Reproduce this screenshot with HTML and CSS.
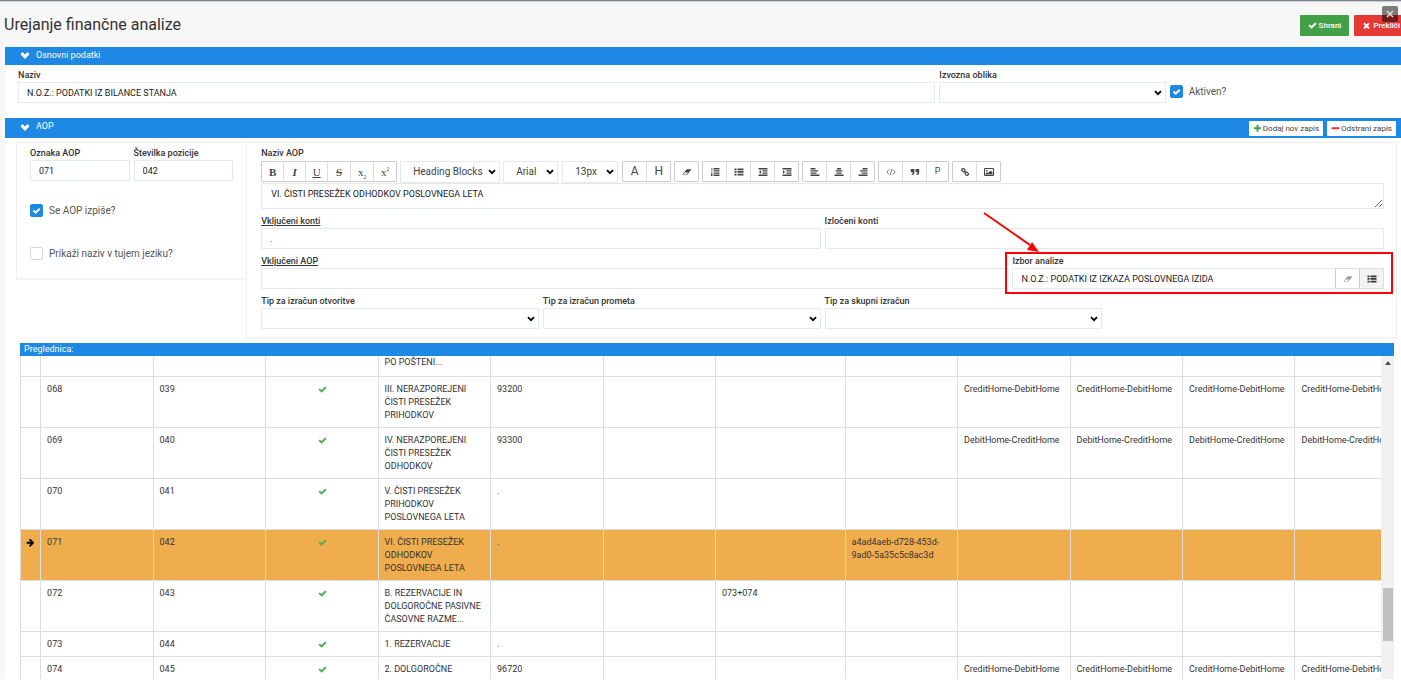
FILE: index.html
```html
<!DOCTYPE html>
<html lang="sl">
<head>
<meta charset="utf-8">
<title>Urejanje finančne analize</title>
<link rel="stylesheet" href="styles.css">
</head>
<body>
<svg class="sprite" aria-hidden="true">
  <symbol id="check" viewBox="0 0 1792 1792"><path d="M1671 566q0 40-28 68l-724 724-136 136q-28 28-68 28t-68-28l-136-136-362-362q-28-28-28-68t28-68l136-136q28-28 68-28t68 28l294 295 656-657q28-28 68-28t68 28l136 136q28 28 28 68z"/></symbol>
  <symbol id="times" viewBox="0 0 1792 1792"><path d="M1490 1322q0 40-28 68l-136 136q-28 28-68 28t-68-28l-294-294-294 294q-28 28-68 28t-68-28l-136-136q-28-28-28-68t28-68l294-294-294-294q-28-28-28-68t28-68l136-136q28-28 68-28t68 28l294 294 294-294q28-28 68-28t68 28l136 136q28 28 28 68t-28 68l-294 294 294 294q28 28 28 68z"/></symbol>
  <symbol id="plus" viewBox="0 0 1792 1792"><path d="M1600 736v192q0 40-28 68t-68 28h-416v416q0 40-28 68t-68 28h-192q-40 0-68-28t-28-68v-416h-416q-40 0-68-28t-28-68v-192q0-40 28-68t68-28h416v-416q0-40 28-68t68-28h192q40 0 68 28t28 68v416h416q40 0 68 28t28 68z"/></symbol>
  <symbol id="minus" viewBox="0 0 1792 1792"><rect x="96" y="640" width="1600" height="384" rx="96"/></symbol>
  <symbol id="chevron" viewBox="0 0 1792 1792"><path d="M1683 808l-742 741q-19 19-45 19t-45-19l-742-741q-19-19-19-45.500t19-45.500l296-295q19-19 45-19t45 19l401 401 401-401q19-19 45-19t45 19l296 295q19 19 19 45.500t-19 45.500z"/></symbol>
  <symbol id="arrow" viewBox="0 0 1792 1792"><path d="M1600 960q0 54-37 91l-651 651q-39 37-91 37-51 0-90-37l-75-75q-38-38-38-91t38-91l293-293h-704q-52 0-84.500-37.500t-32.500-90.500v-128q0-53 32.500-90.500t84.500-37.500h704l-293-294q-38-36-38-90t38-90l75-75q38-38 90-38 53 0 91 38l651 651q37 35 37 90z"/></symbol>
  <symbol id="eraser" viewBox="0 0 1856 1792"><path d="M832 1408l336-384h-768l-336 384h768zm1013-1077q15 34 9.500 71.500t-30.500 65.500l-896 1024q-38 44-96 44h-768q-38 0-69.500-20.500t-47.500-54.500q-15-34-9.500-71.500t30.500-65.500l896-1024q38-44 96-44h768q38 0 69.500 20.500t47.500 54.500z"/></symbol>
  <symbol id="ol" viewBox="0 0 9 8"><path d="M3 0h6v1.400H3zM3 2.200h6v1.400H3zM3 4.400h6v1.400H3zM3 6.600h6v1.400H3zM1 0h.8v2.600H1zM.5 3.400h1.300v1H.5zM.5 5.400h1.500v2.600H.5z"/></symbol>
  <symbol id="ul" viewBox="0 0 9 8"><path d="M0 .5h2v1.700H0zM3 .5h6v1.700H3zM0 3.100h2v1.700H0zM3 3.100h6v1.700H3zM0 5.700h2v1.700H0zM3 5.700h6v1.700H3z"/></symbol>
  <symbol id="outdent" viewBox="0 0 9 8"><path d="M0 0h9v1.400H0zM4 2.200h5v1.400H4zM4 4.400h5v1.400H4zM0 6.600h9v1.400H0zM2.600 2v4L.4 4z"/></symbol>
  <symbol id="indent" viewBox="0 0 9 8"><path d="M0 0h9v1.400H0zM4 2.200h5v1.400H4zM4 4.400h5v1.400H4zM0 6.600h9v1.400H0zM.4 2v4l2.200-2z"/></symbol>
  <symbol id="left" viewBox="0 0 9 8"><path d="M0 0h5v1.400H0zM0 2.200h7.500v1.400H0zM0 4.400h6v1.400H0zM0 6.600h9v1.400H0z"/></symbol>
  <symbol id="center" viewBox="0 0 9 8"><path d="M2.500 0h4v1.400h-4zM1 2.200h7v1.400H1zM2 4.400h5v1.400H2zM0 6.600h9v1.400H0z"/></symbol>
  <symbol id="right" viewBox="0 0 9 8"><path d="M4 0h5v1.400H4zM1.500 2.200H9v1.400H1.500zM3 4.400h6v1.400H3zM0 6.600h9v1.400H0z"/></symbol>
  <symbol id="code" viewBox="0 0 9 8"><path d="M2.500 1.500L.5 4l2 2.500M6.500 1.500l2 2.500-2 2.500M5.300.8L3.700 7.200" fill="none" stroke="currentColor" stroke-width=".7"/></symbol>
  <symbol id="quote" viewBox="0 0 9 8"><path d="M.3 1h3.600v3.500Q3.900 7 1.200 7V5.800q1.200 0 1.200-1.500H.3zM5.100 1h3.600v3.500Q8.700 7 6 7V5.800q1.200 0 1.200-1.500H5.100z"/></symbol>
  <symbol id="link" viewBox="0 0 9 8"><g fill="none" stroke="currentColor" stroke-width="1.200"><rect x="1.200" y=".8" width="3.400" height="2.600" rx="1.200" transform="rotate(40 2.900 2.100)"/><rect x="4.600" y="4.500" width="3.400" height="2.600" rx="1.200" transform="rotate(40 6.300 5.800)"/><path d="M3.600 3l2 2"/></g></symbol>
  <symbol id="image" viewBox="0 0 10 8"><path d="M.5.500h9v7h-9z" fill="none" stroke="currentColor"/><circle cx="2.800" cy="2.600" r=".9"/><path d="M1.500 6.600V5.400L3 4l1 1 2.600-2.600 2 2v2.200z"/></symbol>
</svg>

<div class="page">
  <header class="header">
    <h1 class="title">Urejanje finančne analize</h1>
    <div class="actions">
      <button class="btn save" type="button"><svg class="ico"><use href="#check"/></svg>Shrani</button>
      <button class="btn cancel" type="button"><svg class="ico"><use href="#times"/></svg>Prekliči</button>
    </div>
    <button class="close" type="button" aria-label="Zapri"><svg viewBox="0 0 8 8"><path d="M1 1l6 6M7 1L1 7"/></svg></button>
  </header>

  <main class="content">
    <h2 class="bar basic-bar"><svg class="ico"><use href="#chevron"/></svg>Osnovni podatki</h2>
    <section class="basic grid">
      <div class="field span8"><label for="naziv">Naziv</label><input class="input" id="naziv" value="N.O.Z.: PODATKI IZ BILANCE STANJA"></div>
      <div class="field span2"><label for="oblika">Izvozna oblika</label><select class="input" id="oblika"><option></option></select></div>
      <div class="tick span2"><input type="checkbox" id="aktiven" checked><label for="aktiven">Aktiven?</label></div>
    </section>

    <div class="bar aop-bar">
      <h2 class="bar-title"><svg class="ico"><use href="#chevron"/></svg>AOP</h2>
      <button class="small" type="button"><svg class="ico green"><use href="#plus"/></svg>Dodaj nov zapis</button>
      <button class="small" type="button"><svg class="ico red"><use href="#minus"/></svg>Odstrani zapis</button>
    </div>
    <section class="aop">
      <div class="panel side">
        <div class="pair">
          <div class="field"><label for="oznaka">Oznaka AOP</label><input class="input" id="oznaka" value="071"></div>
          <div class="field"><label for="stevilka">Številka pozicije</label><input class="input" id="stevilka" value="042"></div>
        </div>
        <div class="ticks">
          <div class="tick"><input type="checkbox" id="izpis" checked><label for="izpis">Se AOP izpiše?</label></div>
          <div class="tick"><input type="checkbox" id="tuj"><label for="tuj">Prikaži naziv v tujem jeziku?</label></div>
        </div>
      </div>

      <div class="panel main grid">
        <div class="field span12">
          <label for="nazivaop">Naziv AOP</label>
          <div class="toolbar">
            <div class="group serif">
              <button type="button"><b>B</b></button><button type="button"><b><i>I</i></b></button><button type="button"><u>U</u></button><button type="button"><s>S</s></button><button type="button"><span>x<sub>2</sub></span></button><button type="button"><span>x<sup>2</sup></span></button>
            </div>
            <select class="input blocks" aria-label="Slog"><option>Heading Blocks</option></select>
            <select class="input family" aria-label="Pisava"><option>Arial</option></select>
            <select class="input size" aria-label="Velikost"><option>13px</option></select>
            <div class="group big"><button type="button">A</button><button type="button">H</button></div>
            <div class="group"><button type="button" aria-label="Počisti"><svg class="tool"><use href="#eraser"/></svg></button></div>
            <div class="group">
              <button type="button" aria-label="Oštevilčen seznam"><svg class="tool"><use href="#ol"/></svg></button><button type="button" aria-label="Seznam"><svg class="tool"><use href="#ul"/></svg></button><button type="button" aria-label="Zmanjšaj zamik"><svg class="tool"><use href="#outdent"/></svg></button><button type="button" aria-label="Povečaj zamik"><svg class="tool"><use href="#indent"/></svg></button>
            </div>
            <div class="group">
              <button type="button" aria-label="Levo"><svg class="tool"><use href="#left"/></svg></button><button type="button" aria-label="Sredina"><svg class="tool"><use href="#center"/></svg></button><button type="button" aria-label="Desno"><svg class="tool"><use href="#right"/></svg></button>
            </div>
            <div class="group">
              <button type="button" aria-label="Koda"><svg class="tool"><use href="#code"/></svg></button><button type="button" aria-label="Citat"><svg class="tool"><use href="#quote"/></svg></button><button class="para" type="button">P</button>
            </div>
            <div class="group">
              <button type="button" aria-label="Povezava"><svg class="tool"><use href="#link"/></svg></button><button type="button" aria-label="Slika"><svg class="tool"><use href="#image"/></svg></button>
            </div>
          </div>
          <textarea class="input area" id="nazivaop">VI. ČISTI PRESEŽEK ODHODKOV POSLOVNEGA LETA</textarea>
        </div>
        <div class="field span6"><label class="under" for="vkonti">Vključeni konti</label><input class="input" id="vkonti" value="."></div>
        <div class="field span6"><label for="ikonti">Izločeni konti</label><input class="input" id="ikonti"></div>
        <div class="field span8"><label class="under" for="vaop">Vključeni AOP</label><input class="input" id="vaop"></div>
        <div class="field span4 marked">
          <label for="analiza">Izbor analize</label>
          <div class="combo">
            <input class="input" id="analiza" value="N.O.Z.: PODATKI IZ IZKAZA POSLOVNEGA IZIDA">
            <button class="pick faded" type="button" aria-label="Počisti"><svg class="tool"><use href="#eraser"/></svg></button>
            <button class="pick shaded" type="button" aria-label="Izberi"><svg class="tool"><use href="#ul"/></svg></button>
          </div>
          <svg class="pointer" viewBox="0 0 60 44"><path d="M2 2l46 32" fill="none" stroke="#f00" stroke-width="2"/><path d="M57 41l-12-2 5-8z" fill="#f00"/></svg>
        </div>
        <div class="field span3"><label for="otv">Tip za izračun otvoritve</label><select class="input" id="otv"><option></option></select></div>
        <div class="field span3"><label for="pro">Tip za izračun prometa</label><select class="input" id="pro"><option></option></select></div>
        <div class="field span3"><label for="sku">Tip za skupni izračun</label><select class="input" id="sku"><option></option></select></div>
      </div>
    </section>

    <section class="list">
      <h2 class="list-title">Preglednica:</h2>
      <div class="list-body">
        <div class="viewport">
          <table class="table">
            <colgroup><col class="c-mark"><col><col><col><col><col><col><col class="c-wide"><col><col><col><col><col></colgroup>
            <tbody>
              <tr><td></td><td></td><td></td><td></td><td>PO POŠTENI...</td><td></td><td></td><td></td><td></td><td></td><td></td><td></td><td></td></tr>
              <tr><td></td><td>068</td><td>039</td><td class="ok"><svg class="ico"><use href="#check"/></svg></td><td>III. NERAZPOREJENI ČISTI PRESEŽEK PRIHODKOV</td><td>93200</td><td></td><td></td><td></td><td>CreditHome-DebitHome</td><td>CreditHome-DebitHome</td><td>CreditHome-DebitHome</td><td>CreditHome-DebitHome</td></tr>
              <tr><td></td><td>069</td><td>040</td><td class="ok"><svg class="ico"><use href="#check"/></svg></td><td>IV. NERAZPOREJENI ČISTI PRESEŽEK ODHODKOV</td><td>93300</td><td></td><td></td><td></td><td>DebitHome-CreditHome</td><td>DebitHome-CreditHome</td><td>DebitHome-CreditHome</td><td>DebitHome-CreditHome</td></tr>
              <tr><td></td><td>070</td><td>041</td><td class="ok"><svg class="ico"><use href="#check"/></svg></td><td>V. ČISTI PRESEŽEK PRIHODKOV POSLOVNEGA LETA</td><td>.</td><td></td><td></td><td></td><td></td><td></td><td></td><td></td></tr>
              <tr class="selected"><td class="mark"><svg class="ico"><use href="#arrow"/></svg></td><td>071</td><td>042</td><td class="ok"><svg class="ico"><use href="#check"/></svg></td><td>VI. ČISTI PRESEŽEK ODHODKOV POSLOVNEGA LETA</td><td>.</td><td></td><td></td><td>a4ad4aeb-d728-453d-9ad0-5a35c5c8ac3d</td><td></td><td></td><td></td><td></td></tr>
              <tr><td></td><td>072</td><td>043</td><td class="ok"><svg class="ico"><use href="#check"/></svg></td><td>B. REZERVACIJE IN DOLGOROČNE PASIVNE ČASOVNE RAZME...</td><td></td><td></td><td>073+074</td><td></td><td></td><td></td><td></td><td></td></tr>
              <tr><td></td><td>073</td><td>044</td><td class="ok"><svg class="ico"><use href="#check"/></svg></td><td>1. REZERVACIJE</td><td>.</td><td></td><td></td><td></td><td></td><td></td><td></td><td></td></tr>
              <tr><td></td><td>074</td><td>045</td><td class="ok"><svg class="ico"><use href="#check"/></svg></td><td>2. DOLGOROČNE</td><td>96720</td><td></td><td></td><td></td><td>CreditHome-DebitHome</td><td>CreditHome-DebitHome</td><td>CreditHome-DebitHome</td><td>CreditHome-DebitHome</td></tr>
            </tbody>
          </table>
        </div>
        <div class="scroll"><span class="scroll-up"></span><span class="scroll-thumb"></span></div>
      </div>
    </section>
  </main>
</div>
</body>
</html>
```
FILE: styles.css
```css
* { box-sizing: border-box; }

body {
  margin: 0;
  height: 100vh;
  padding-bottom: 6px;
  overflow: hidden;
  display: flex;
  flex-direction: column;
  background: #fff;
  color: #333;
  font: 9px/13px Roboto, "Liberation Sans", sans-serif;
}

button, input, select, textarea { font: inherit; color: inherit; margin: 0; }
h1, h2 { margin: 0; font-weight: 400; }
.sprite { position: absolute; width: 0; height: 0; }
.ico { width: 9px; height: 9px; fill: currentColor; flex: none; }

.page {
  flex: 1;
  min-height: 0;
  display: flex;
  flex-direction: column;
  overflow: hidden;
  background: #f7f7f7;
  border-top: 1px solid #7c8591;
}

.header {
  position: relative;
  display: flex;
  justify-content: space-between;
  align-items: center;
  height: 46px;
  padding: 2px 0 0 4px;
  flex: none;
  box-shadow: inset 0 2px 1px -1px #c8cacf;
}
.title { font-size: 16px; line-height: 20px; }
.actions { display: flex; gap: 5px; margin-right: -5px; }
.btn {
  display: flex;
  align-items: center;
  gap: 2px;
  height: 21px;
  padding: 0 8px;
  border: 0;
  border-radius: 1px;
  color: #fff;
  font-size: 8px;
  font-weight: 500;
}
.save { background: #43a047; }
.cancel { background: #e53935; padding-right: 6px; }
.close {
  position: absolute;
  top: 5px;
  right: 3px;
  width: 16px;
  height: 16px;
  padding: 4px;
  border: 0;
  border-radius: 2px;
  background: rgba(0, 0, 0, .5);
}
.close svg { display: block; width: 8px; height: 8px; stroke: #ddd; stroke-width: 1.500; fill: none; }

.content {
  flex: 1;
  min-height: 0;
  margin-left: 5px;
  display: flex;
  flex-direction: column;
  background: #fff;
}
.bar {
  display: flex;
  align-items: center;
  gap: 6px;
  flex: none;
  padding: 0 5px 2px 15px;
  background: #1e88e5;
  color: #fff;
  font-size: 9px;
}
.bar .ico { width: 10px; height: 10px; }
.basic-bar { height: 18px; }
.aop-bar { height: 20px; gap: 4px; padding-bottom: 0; }
.bar-title { display: flex; align-items: center; gap: 6px; flex: 1; font-size: 9px; padding-bottom: 3px; }
.small {
  display: flex;
  align-items: center;
  gap: 1px;
  height: 15px;
  padding: 0 4px;
  border: 0;
  border-radius: 1px;
  background: #fff;
  color: #444;
  font-size: 8px;
}
.bar .small .ico { width: 9px; height: 9px; }
.green { color: #43a047; }
.red { color: #e53935; }

.grid { display: grid; grid-template-columns: repeat(12, 1fr); column-gap: 4px; row-gap: 5px; }
.span2 { grid-column: span 2; }
.span3 { grid-column: span 3; }
.span4 { grid-column: span 4; }
.span6 { grid-column: span 6; }
.span8 { grid-column: span 8; }
.span12 { grid-column: span 12; }

.basic { padding: 3px 5px 15px 13px; }
.basic .tick { align-self: end; padding-bottom: 5px; }

.field { display: flex; flex-direction: column; min-width: 0; }
.field > label { line-height: 14px; font-weight: 500; align-self: flex-start; }
.under { text-decoration: underline; }
.input {
  width: 100%;
  height: 21px;
  padding: 0 8px;
  border: 1px solid #e3e9f1;
  border-radius: 1px;
  background-color: #fff;
  color: #222;
}
select.input {
  appearance: none;
  background: #fff url("data:image/svg+xml,%3Csvg xmlns='http://www.w3.org/2000/svg' viewBox='0 0 8 6'%3E%3Cpath d='M1 1.200l3 3 3-3' fill='none' stroke='black' stroke-width='1.800'/%3E%3C/svg%3E") no-repeat right 3px center / 8px 6px;
}

.tick { display: flex; align-items: center; gap: 6px; font-size: 10px; color: #555; }
.tick input {
  appearance: none;
  width: 13px;
  height: 13px;
  border: 1px solid #d8d8d8;
  border-radius: 2px;
  background: #fff;
}
.tick input:checked {
  border-color: #1e88e5;
  background: #1e88e5 url("data:image/svg+xml,%3Csvg xmlns='http://www.w3.org/2000/svg' viewBox='0 0 11 11'%3E%3Cpath d='M2.500 5.500l2.200 2.200 4-4' fill='none' stroke='white' stroke-width='2'/%3E%3C/svg%3E");
}

.aop { display: grid; grid-template-columns: 1fr 5fr; align-items: start; padding: 4px 4px 0 11px; flex: none; }
.panel { border: 1px solid #f0f0f0; border-bottom: 2px solid #f4f4f4; }
.side { padding: 3px 13px 18px; border-right: 0; }
.pair { display: grid; grid-template-columns: 1fr 1fr; gap: 4px; }
.ticks { display: grid; gap: 30px; padding-top: 23px; }
.main { padding: 3px 12px 8px 14px; }

.toolbar { display: flex; align-items: center; gap: 3px; height: 23px; }
.toolbar .input { height: 22px; color: #444; font-size: 10px; padding: 0 0 0 12px; }
.toolbar .blocks { width: 100px; }
.toolbar .family { width: 55px; margin-right: 1px; }
.toolbar .size { width: 56px; margin-right: 1px; }
.group { display: flex; border: 1px solid #ccc; border-radius: 1px; }
.group button {
  display: flex;
  align-items: center;
  justify-content: center;
  width: 24px;
  height: 19px;
  padding: 0;
  border: 0;
  border-left: 1px solid #ddd;
  background: #fff;
  color: #444;
}
.group button:first-child { border-left: 0; width: 23px; }
.group .para { width: 22px; }
.group.serif button { width: 23px; font: 11px/12px "Liberation Serif", serif; }
.group.serif button:nth-child(-n+3) { width: 22px; }
.group.serif button:first-child { width: 21px; }
.serif sub, .serif sup { font-size: 6px; line-height: 0; }
.big button { font-size: 12px; }
.tool { width: 10px; height: 8px; fill: currentColor; }

.area { height: 26px; padding: 4px 9px; line-height: 13px; resize: vertical; overflow: hidden; display: block; }

.marked { position: relative; }
.marked::after {
  content: "";
  position: absolute;
  inset: -2px -9px -5px -7px;
  border: 2px solid #f00;
  pointer-events: none;
}
.marked::before {
  content: "";
  position: absolute;
  inset: 0 auto 0 -7px;
  width: 7px;
  background: #fff;
}
.pointer { position: absolute; left: -30px; top: -43px; width: 60px; height: 44px; }
.combo { display: flex; }
.combo .input { flex: 1; min-width: 0; }
.pick { width: 25px; height: 21px; padding: 0; border: 1px solid #ddd; border-left-color: #ccc; background: #fff; display: flex; align-items: center; justify-content: center; margin-left: -1px; }
.faded { color: #999; }
.shaded { background: #f3f3f3; }

.list { flex: 1; min-height: 0; display: flex; flex-direction: column; margin: 4px 7px 0 15px; }
.list-title { flex: none; font-size: 9px; line-height: 13px; padding-left: 4px; background: #1e88e5; color: #fff; }
.list-body { flex: 1; min-height: 0; display: flex; }
.viewport { flex: 1; min-width: 0; overflow: hidden; }
.table { table-layout: fixed; width: 1388px; border-collapse: separate; border-spacing: 0; border-left: 1px solid #ddd; }
.table col { width: 112px; }
.table .c-mark { width: 20px; }
.table .c-wide { width: 129px; }
.table td { vertical-align: top; padding: 6px 4px 5px 6px; border-right: 1px solid #ddd; border-bottom: 1px solid #ddd; }
.table tr:first-child td { padding-top: 0; padding-bottom: 7px; }
.table .ico { vertical-align: -2px; }
.table .ok { text-align: center; color: #4caf50; padding-left: 4px; padding-right: 3px; }
.table .mark { padding-left: 5px; color: #000; }
.selected td { background: #f0ad4e; }

.scroll { width: 13px; background: #f1f1f1; display: flex; flex-direction: column; align-items: center; justify-content: space-between; padding: 5px 0 38px; }
.scroll-up { border: 3px solid transparent; border-top: 0; border-bottom: 4px solid #505050; }
.scroll-thumb { width: 10px; height: 53px; background: #c1c1c1; }
```
